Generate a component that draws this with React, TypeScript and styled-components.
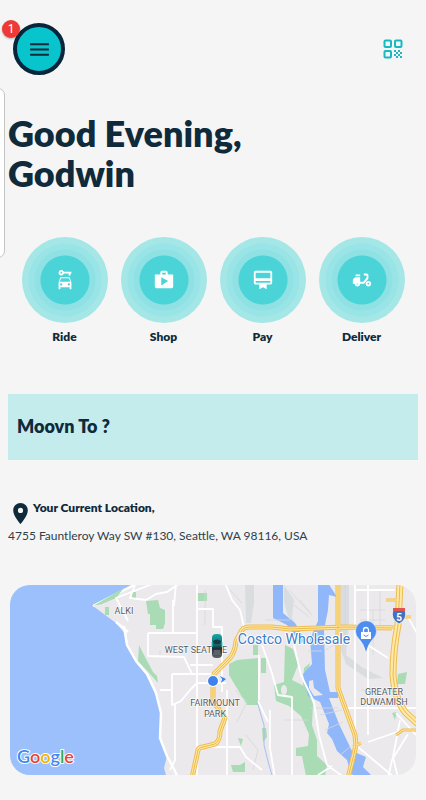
import React from "react";
import styled, { createGlobalStyle } from "styled-components";
import {
  MdMenu,
  MdCarRental,
  MdShop,
  MdCardMembership,
  MdDeliveryDining,
  MdLocationOn,
} from "react-icons/md";
import type { IconType } from "react-icons";

const navy = "#0e2a3b";
const teal = "#08c4cc";

const GlobalStyle = createGlobalStyle`
  * { box-sizing: border-box; }
  body {
    margin: 0;
    background: #f5f5f5;
    color: ${navy};
    font-family: Lato, "Open Sans", sans-serif;
  }
  button { font: inherit; color: inherit; border: 0; padding: 0; background: none; cursor: pointer; }
`;

const Page = styled.main`
  position: relative;
  padding: 23px 8px 24px;
  overflow: hidden;
`;

const DrawerEdge = styled.div`
  position: absolute;
  left: -16px;
  top: 88px;
  width: 21px;
  height: 170px;
  background: #fff;
  border: 1px solid #c4c4c4;
  border-radius: 7px;
`;

const Header = styled.header`
  display: flex;
  align-items: center;
  justify-content: space-between;
  padding: 0 15px 0 5px;
`;

const MenuButton = styled.button`
  position: relative;
  display: grid;
  place-items: center;
  width: 52px;
  height: 52px;
  border-radius: 50%;
  border: 4px solid #08263b;
  background: ${teal};
`;

const Badge = styled.span`
  position: absolute;
  left: -15px;
  top: -7px;
  width: 18px;
  height: 18px;
  border-radius: 50%;
  background: #ee3a36;
  box-shadow: 0 1px 2px rgba(0, 0, 0, 0.3);
  color: #fff;
  font: 12px/18px Roboto, sans-serif;
  text-align: center;
`;

const QrButton = styled.button`
  display: grid;
  color: #18b9c1;
`;

const Greeting = styled.h1`
  margin: 38px 0 0;
  font-size: 36px;
  line-height: 40px;
  font-weight: 800;
`;

const Services = styled.nav`
  display: grid;
  grid-template-columns: repeat(4, 1fr);
  margin-top: 44px;
  padding: 0 7px;
`;

const ServiceButton = styled.button`
  display: flex;
  flex-direction: column;
  align-items: center;
  gap: 6px;
  font-size: 12px;
  line-height: 16px;
  font-weight: 800;
`;

const Rings = styled.span`
  display: grid;
  place-items: center;
  width: 86px;
  height: 86px;
  border-radius: 50%;
  color: #fff;
  background: radial-gradient(
    circle closest-side,
    #4bd4d8 0 24px,
    #8fe1e3 25px 30px,
    #99e4e6 31px 36px,
    #a5e7e7 37px 100%
  );
`;

const Destination = styled.button`
  display: block;
  width: 100%;
  margin-top: 49px;
  padding: 20px 9px 22px;
  background: #c5eced;
  text-align: left;
  font-size: 18px;
  line-height: 24px;
  font-weight: 800;
`;

const Place = styled.section`
  margin-top: 38px;
`;

const PlaceHeading = styled.h2`
  display: flex;
  align-items: flex-start;
  margin: 0;
  font-size: 12px;
  line-height: 20px;
  font-weight: 800;

  svg { margin-top: 3px; }
`;

const Address = styled.p`
  margin: 0;
  font-size: 12px;
  line-height: 20px;
  color: #30404a;
`;

const MapCard = styled.section`
  margin: 39px 2px 0;
  border-radius: 20px;
  overflow: hidden;

  svg { display: block; width: 100%; height: auto; }
`;

const services: { label: string; Icon: IconType }[] = [
  { label: "Ride", Icon: MdCarRental },
  { label: "Shop", Icon: MdShop },
  { label: "Pay", Icon: MdCardMembership },
  { label: "Deliver", Icon: MdDeliveryDining },
];

const highways = [
  "M192 778L198 750Q199 747 203 747L215 744Q220 741 220 731L225 718L213 701V682L214 674L230 658Q235 652 236 641L242 630Q244 627 250 627L272 627L290 629L345 627L392 628",
  "M338 583V688L355 735L356 745L352 762L348 778",
  "M400 583L398 625Q393 650 393 675Q395 700 406 713L418 724",
];

const ramps = [
  "M386 600h12M399 617h12M383 627h13M396 735l7-5h14M353 747l8-4",
];

const streets = [
  "M155 583L116 598L128 621",
  "M135 585L130 598L146 600L156 594L167 592L180 583",
  "M173 600V632M176 583L174 606M197 583V778M197 609H213V627H222V660M148 633H197M148 633V656L184 657L192 674H213M190 665H213M172 674H197M172 674V690M172 690V705L181 701L190 690L197 683H226M172 690H160",
  "M175 704V760L170 770M197 747H240L246 757L262 770M227 690V778M222 650V692",
  "M225 583L232 600L240 610L244 627M259 655V700M262 645L271 670L278 695L292 697V778",
  "M294 645L301 675L314 702L319 735L327 765M270 710V748L275 778M258 701L268 722",
  "M355 583V650L355 740M368 583V680L368 735M355 590H395M360 640L388 658M345 708H416M358 747L395 778",
  "M368 742L400 731M400 720L393 757L398 778M408 734L392 760L388 778M396 713L416 735M408 617L418 635M327 765L345 778M318 775L332 766",
];

function QrIcon() {
  return (
    <svg width="20" height="20" viewBox="0 0 20 20" aria-hidden="true">
      <g fill="none" stroke="currentColor" strokeWidth="2">
        <rect x="1.5" y="1.5" width="6.5" height="6.5" rx="1" />
        <rect x="12" y="1.5" width="6.5" height="6.5" rx="1" />
        <rect x="1.5" y="12" width="6.5" height="6.5" rx="1" />
      </g>
      <path
        d="M11 11h2v2h-2zM15 11h2v2h-2zM13 13h2v2h-2zM17 13h2v2h-2zM11 15h2v2h-2zM15 15h2v2h-2zM13 17h2v2h-2zM17 17h2v2h-2z"
        fill="currentColor"
      />
    </svg>
  );
}

function LocationMap() {
  return (
    <svg viewBox="10 585 406 190" role="img" aria-label="Map of West Seattle">
      <defs>
        <linearGradient id="car" x1="0" y1="0" x2="0" y2="1">
          <stop offset="0" stopColor="#16aaa8" />
          <stop offset="0.45" stopColor="#14696f" />
          <stop offset="0.6" stopColor="#252d34" />
          <stop offset="1" stopColor="#5d6266" />
        </linearGradient>
      </defs>
      <rect x="10" y="585" width="406" height="190" fill="#ebe9ec" />

      <path
        d="M10 585H134L93 606L116 623L126 635L127 645L136 661L147 674L156 693L161 713L160 738L167 756L164 768L166 775H10Z"
        fill="#9cc0fb"
      />
      <path
        d="M124 626L127 645L136 661L147 674L156 693L161 713L160 738L167 756L174 769L178 778M116 622L128 632M93 606L134 585"
        fill="none" stroke="#fff" strokeWidth="2.5" strokeLinejoin="round"
      />

      <g fill="#d9dde0">
        <path d="M245 585h9v18l-3 20h-5zM341 585h8v38l-3 32 17 13 20 10-15 1-22-15-5-14zM284 585l10 15-2 18 4 6-8-8-4-14z" />
      </g>

      <g fill="#a9dbb4">
        <path d="M146 601l12-1 2 8 5 2v13l-2 6h-7v-4h-6v-11h-2zM132 592h4v7h-4zM197 593h10v8h-10zM105 607h4v8h-4zM93 606l31-18-8 10-14 6zM139 645l5 10 9 17 4 4 1 7-8-9-12-13z" />
        <path d="M229 664l8-4 21-2v47h-11l-18-30zM261 658h5v15h-5zM253 645h5v10h-5z" />
        <path d="M285 645l8 4 5 16-6 15 16 8 5 17-1 20 5 15v16l10 9-2 11h-19l-4-20h-6v-8l12-2 1-12-8-18-12-10-13-5-2-16 10-3zM304 668l6-5-4 15 4 12-7-5z" />
        <path d="M398 674l9-2-2 12h-8zM392 713l5-1-2 8zM238 738l5 1-2 7zM231 765h9l5-3v10h-12zM262 728h4l1 9-4 5z" />
      </g>
      <ellipse cx="284" cy="690" rx="3" ry="5" fill="#ebe9ec" />

      <g fill="#91b7fb">
        <path d="M273 583h10v30l12 10 11 18-6 2-13-18-14-7z" />
        <path d="M318 583h10l9 14-8-2-1 15-4 20 1 40 5 22h8v6h-9l10 26 13 27 14 6-3 10 10 10-4 5-18-8-4-14-10-9-5-12-5-6 2-9-9-22-12-6-5-22 9-10-2-25 8-18z" />
      </g>
      <path d="M309 681l4-1 1 8 9 7-9 1-5-8z" fill="#ebe9ec" />
      <path d="M257 701l4 14 3 10v20l5 20 3 10" fill="none" stroke="#a6bff0" />

      <g fill="none" stroke="#d6d8da" strokeWidth="0.8">
        <path d="M205 590v35M160 650v7M235 690l12 12-10 20M230 590l12 13M285 720h24M320 715l22-5M325 730l18-8M360 610h25M373 610v45M380 590v35M360 620h25M361 690h35M330 642h8M308 651h14M310 708h28M340 755l10-8M265 620h25M325 650l13-7M246 735l12 15-5 20M300 600l12 15M294 605l15 12M345 585v50M289 590l20 22" />
      </g>

      <g fill="none" stroke="#fff" strokeWidth="1.8" strokeLinejoin="round">
        {streets.map((d) => <path key={d} d={d} />)}
      </g>
      <g fill="none" stroke="#eebd52" strokeWidth="5" strokeLinejoin="round">
        {highways.slice(0, 2).map((d) => <path key={d} d={d} />)}
        <path d={highways[2]} strokeWidth="7" />
        {ramps.map((d) => <path key={d} d={d} strokeWidth="3" />)}
      </g>
      <g fill="none" stroke="#ffe9a5" strokeWidth="3" strokeLinejoin="round">
        {highways.slice(0, 2).map((d) => <path key={d} d={d} />)}
        <path d={highways[2]} strokeWidth="5" />
        {ramps.map((d) => <path key={d} d={d} strokeWidth="1" />)}
      </g>
      <g fill="none" stroke="#edb94a" strokeWidth="1">
        {highways.map((d) => <path key={d} d={d} />)}
      </g>

      <g
        fontFamily="Roboto, sans-serif" fontSize="9" fill="#555b62" textAnchor="middle"
        stroke="#fff" strokeWidth="1" strokeLinejoin="round" paintOrder="stroke"
      >
        <text x="124" y="614">ALKI</text>
        <text x="196" y="653">WEST SEATTLE</text>
        <text x="215" y="706">FAIRMOUNT</text>
        <text x="215" y="717">PARK</text>
        <text x="384" y="695">GREATER</text>
        <text x="384" y="705">DUWAMISH</text>
        <text x="294" y="644" fontSize="14" strokeWidth="2" fill="#3d7cc9">Costco Wholesale</text>
      </g>

      <rect x="212" y="634" width="10" height="24" rx="4" fill="url(#car)" />
      <path d="M213 641q4-3 8 0l-1 3h-6z" fill="#173c43" />
      <path d="M214 650h6l1 5h-8z" fill="#596269" />
      <path d="M212 642v5M222 642v5" stroke="#20d6cf" />

      <circle cx="213" cy="681" r="6" fill="#fff" />
      <circle cx="213" cy="681" r="5" fill="#3f82ee" />
      <path d="M220 676l6 3-5 4 1-4z" fill="#3f82ee" />

      <path d="M366 653q-2-9-7-14a10.5 10.5 0 1 1 14 0q-5 5-7 14z" fill="#4f8cf0" stroke="#fff" strokeWidth="0.5" />
      <path d="M361 632h10v7h-10z" fill="#fff" />
      <path d="M363.5 632v-2a2.5 2.5 0 0 1 5 0v2" fill="none" stroke="#fff" strokeWidth="1.3" />
      <path d="M363.5 635q2.5 3 5 0" fill="none" stroke="#4f8cf0" />

      <path d="M393 610h12q3 9-6 14q-9-5-6-14z" fill="#3f73bd" stroke="#fff" strokeWidth="0.7" />
      <path d="M393 608h12v3h-12z" fill="#df554e" />
      <text x="399" y="621" fontFamily="Roboto, sans-serif" fontWeight="700" fontSize="10" fill="#fff" textAnchor="middle">5</text>

      <text
        x="17" y="763" fontFamily="Lato, sans-serif" fontSize="18" fontWeight="600"
        stroke="#fff" strokeWidth="2" strokeLinejoin="round" paintOrder="stroke"
      >
        <tspan fill="#4285f4">G</tspan>
        <tspan fill="#ea4335">o</tspan>
        <tspan fill="#f4b400">o</tspan>
        <tspan fill="#4285f4">g</tspan>
        <tspan fill="#34a853">l</tspan>
        <tspan fill="#ea4335">e</tspan>
      </text>
    </svg>
  );
}

export default function App() {
  return (
    <>
      <GlobalStyle />
      <Page>
        <DrawerEdge />
        <Header>
          <MenuButton aria-label="Menu, 1 notification">
            <MdMenu size={25} />
            <Badge>1</Badge>
          </MenuButton>
          <QrButton aria-label="Scan code">
            <QrIcon />
          </QrButton>
        </Header>
        <Greeting>
          Good Evening,
          <br />
          Godwin
        </Greeting>
        <Services aria-label="Services">
          {services.map(({ label, Icon }) => (
            <ServiceButton key={label}>
              <Rings>
                <Icon size={22} />
              </Rings>
              {label}
            </ServiceButton>
          ))}
        </Services>
        <Destination>Moovn To ?</Destination>
        <Place>
          <PlaceHeading>
            <MdLocationOn size={25} />
            Your Current Location,
          </PlaceHeading>
          <Address>4755 Fauntleroy Way SW #130, Seattle, WA 98116, USA</Address>
        </Place>
        <MapCard>
          <LocationMap />
        </MapCard>
      </Page>
    </>
  );
}
